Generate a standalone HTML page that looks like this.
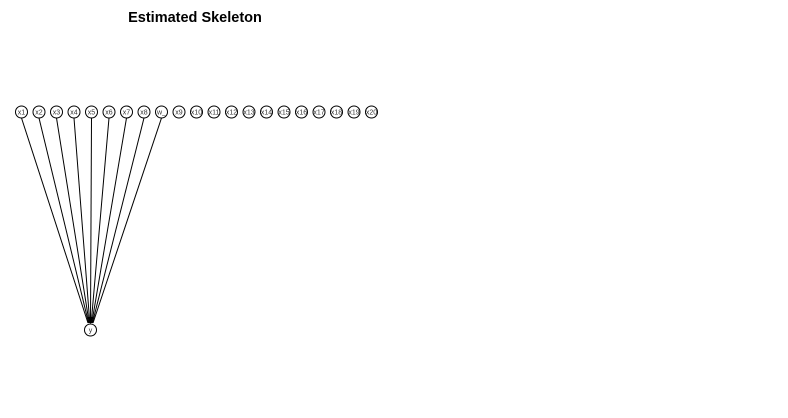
<!DOCTYPE html>
<html><head><style>
html,body{margin:0;padding:0;background:#fff;width:788px;height:418px;overflow:hidden}
</style></head><body>
<svg width="788" height="418" xmlns="http://www.w3.org/2000/svg" font-family="Liberation Sans, sans-serif">
<text x="195" y="22" text-anchor="middle" font-weight="bold" font-size="14.5">Estimated Skeleton</text>
<g stroke="#000" stroke-width="1" fill="none">
<line x1="21.5" y1="118" x2="88" y2="323"/>
<line x1="39" y1="118" x2="88.6" y2="323"/>
<line x1="56.5" y1="118" x2="89.2" y2="323"/>
<line x1="74" y1="118" x2="89.8" y2="323"/>
<line x1="91.5" y1="118" x2="90.5" y2="323"/>
<line x1="109" y1="118" x2="91.2" y2="323"/>
<line x1="126.5" y1="118" x2="91.8" y2="323"/>
<line x1="144" y1="118" x2="92.4" y2="323"/>
<line x1="161.5" y1="118" x2="93" y2="323"/>
</g>
<g fill="#000">
<polygon points="90.5,324 87.5,317 93.5,317"/>
</g>
<g stroke="#000" stroke-width="1" fill="#fff">
<circle cx="21.5" cy="112" r="6"/><circle cx="39" cy="112" r="6"/><circle cx="56.5" cy="112" r="6"/><circle cx="74" cy="112" r="6"/><circle cx="91.5" cy="112" r="6"/><circle cx="109" cy="112" r="6"/><circle cx="126.5" cy="112" r="6"/><circle cx="144" cy="112" r="6"/><circle cx="161.5" cy="112" r="6"/><circle cx="179" cy="112" r="6"/><circle cx="196.5" cy="112" r="6"/><circle cx="214" cy="112" r="6"/><circle cx="231.5" cy="112" r="6"/><circle cx="249" cy="112" r="6"/><circle cx="266.5" cy="112" r="6"/><circle cx="284" cy="112" r="6"/><circle cx="301.5" cy="112" r="6"/><circle cx="319" cy="112" r="6"/><circle cx="336.5" cy="112" r="6"/><circle cx="354" cy="112" r="6"/><circle cx="371.5" cy="112" r="6"/>
<circle cx="90.5" cy="330" r="6"/>
</g>
<g font-size="7" text-anchor="middle" fill="#333">
<text x="21.5" y="114.5">x1</text><text x="39" y="114.5">x2</text><text x="56.5" y="114.5">x3</text><text x="74" y="114.5">x4</text><text x="91.5" y="114.5">x5</text><text x="109" y="114.5">x6</text><text x="126.5" y="114.5">x7</text><text x="144" y="114.5">x8</text><text x="161.5" y="114.5">w_</text><text x="179" y="114.5">x9</text><text x="196.5" y="114.5">x10</text><text x="214" y="114.5">x11</text><text x="231.5" y="114.5">x12</text><text x="249" y="114.5">x13</text><text x="266.5" y="114.5">x14</text><text x="284" y="114.5">x15</text><text x="301.5" y="114.5">x16</text><text x="319" y="114.5">x17</text><text x="336.5" y="114.5">x18</text><text x="354" y="114.5">x19</text><text x="371.5" y="114.5">x20</text>
<text x="90.5" y="332.5">y</text>
</g>
</svg>
</body></html>
